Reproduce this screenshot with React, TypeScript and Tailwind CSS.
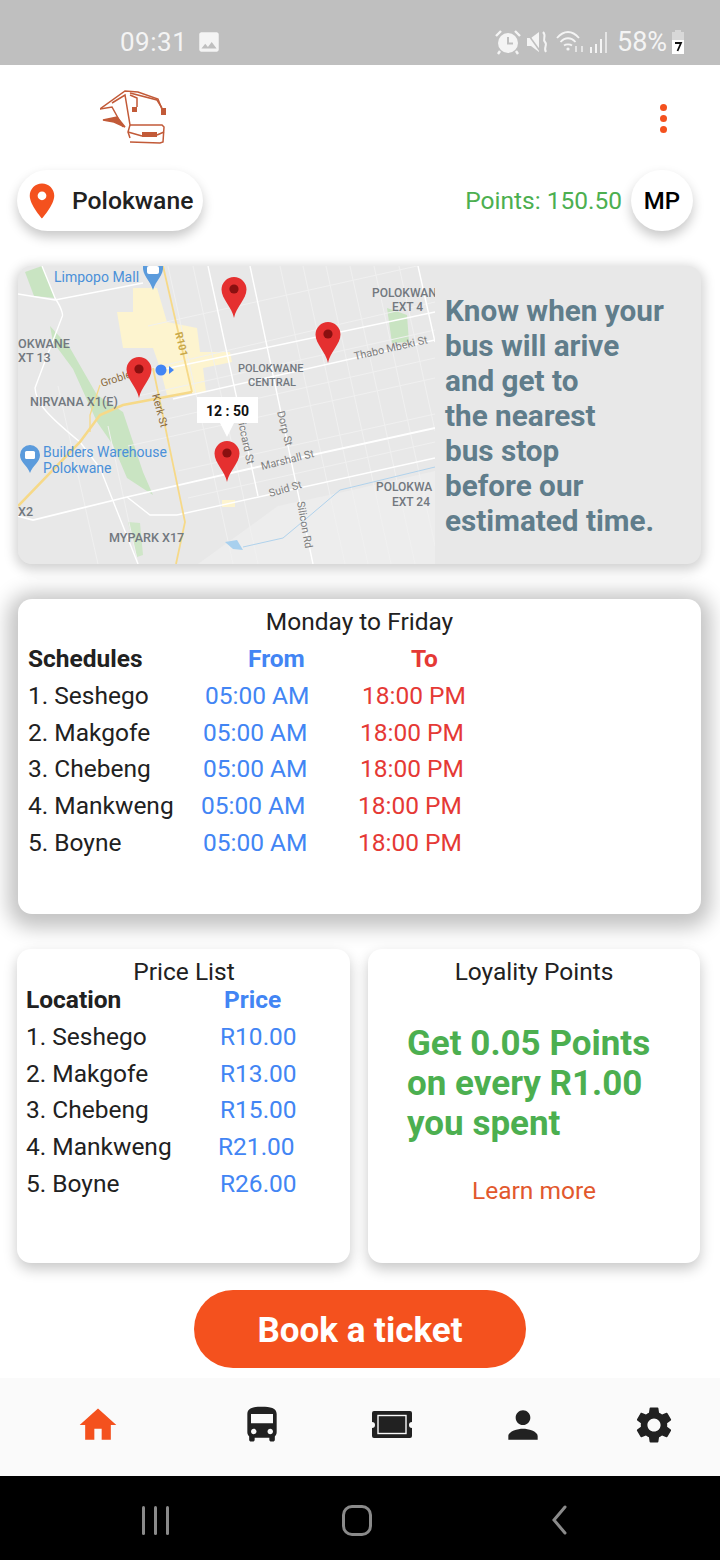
import { MdHome, MdDirectionsBus, MdPerson, MdSettings, MdPhoto, MdPlace } from 'react-icons/md';

const schedules = [
  { name: '1. Seshego', from: 'pl-[4px]', to: 'pl-[4px]' },
  { name: '2. Makgofe', from: 'pl-[2px]', to: 'pl-[2px]' },
  { name: '3. Chebeng', from: 'pl-[2px]', to: 'pl-[2px]' },
  { name: '4. Mankweng', from: 'pl-0', to: 'pl-0' },
  { name: '5. Boyne', from: 'pl-[2px]', to: 'pl-0' },
];

const prices = [
  { name: '1. Seshego', price: 'R10.00', cls: 'pl-[2px]' },
  { name: '2. Makgofe', price: 'R13.00', cls: 'pl-[2px]' },
  { name: '3. Chebeng', price: 'R15.00', cls: 'pl-[2px]' },
  { name: '4. Mankweng', price: 'R21.00', cls: 'pl-0' },
  { name: '5. Boyne', price: 'R26.00', cls: 'pl-[2px]' },
];

function Pin({ x, y }: { x: number; y: number }) {
  return (
    <g transform={`translate(${x} ${y})`}>
      <path d="M0 41C-2 30 -12.5 22 -12.5 12.5A12.5 12.5 0 0 1 12.5 12.5C12.5 22 2 30 0 41Z" fill="#e53030" />
      <circle cx="0" cy="12" r="4.6" fill="#8a1010" />
    </g>
  );
}

function MapDrawing() {
  return (
    <svg viewBox="0 0 417 298" className="h-[298px] w-[417px] shrink-0" fontFamily="Roboto, sans-serif">
      <rect width="417" height="298" fill="#e8e8e8" />
      <path d="M180 298L260 240L330 225L417 205V298Z" fill="#ededed" />
      {/* parks */}
      <path d="M7 6L24 0L37 32L16 30Z" fill="#c9e4c2" />
      <path d="M32 60L52 82L79 129L105 146L125 206L135 229L109 212L95 179L79 156L55 103L35 76Z" fill="#c9e4c2" />
      <path d="M369 42L389 49L391 76L374 77Z" fill="#c9e4c2" />
      <path d="M110 256L122 257L125 289L119 291Z" fill="#cfe6c8" />
      {/* built-up area */}
      <path d="M115 22H139L149 56L179 62L182 86L212 86L214 96L185 102L188 126L149 129L142 102L135 82L105 82L99 46L115 46Z" fill="#fdf4cf" />
      <path d="M204 234H217V241H204Z" fill="#fdf4cf" />
      {/* minor streets */}
      <g stroke="#f0f0f0" strokeWidth="1" fill="none">
        <path d="M130 60L417 -4M120 130L417 64M140 155L417 92M110 180L417 112M160 205L417 148M170 232L417 176M100 110L417 36" />
        <path d="M150 0L215 298M175 0L240 298M262 0L327 298M285 0L350 298M308 0L373 298M332 0L397 298M356 0L417 280M381 0L417 165M40 120L80 298M90 160L120 298" />
      </g>
      {/* roads */}
      <g stroke="#ffffff" strokeWidth="1.4" fill="none">
        <path d="M0 28L37 34L125 17" />
        <path d="M24 0L37 32C45 44 45 50 44 51C35 75 27 95 17 122C18 135 24 145 62 176L82 202L120 298" />
        <path d="M190 0L240 230" />
        <path d="M232 0L295 298" />
        <path d="M400 0L417 76" />
        <path d="M0 250L15 254L109 231L235 202L417 162" strokeWidth="1.8" />
        <path d="M109 231L132 249L159 249L417 192" />
        <path d="M142 104L417 46" />
        <path d="M155 133L417 74" />
      </g>
      {/* yellow roads */}
      <g stroke="#f6d988" strokeWidth="1.8" fill="none">
        <path d="M135 102L167 256L158 298" />
        <path d="M145 0L174 126" />
        <path d="M0 240L62 176L82 149L105 139L174 126" strokeWidth="2.6" />
        <path d="M82 119L72 149V166" strokeWidth="1.3" />
      </g>
      {/* water */}
      <path d="M225 281L265 272L289 252L322 224L355 216L417 201" stroke="#b0d2ec" strokeWidth="1" fill="none" />
      <path d="M207 276L219 274L225 284L215 283Z" fill="#a8d0ee" />
      {/* area labels */}
      <g fill="#72787f" fontSize="12.6" fontWeight="500">
        <text x="354" y="31" fontSize="12">POLOKWAN</text>
        <text x="374" y="45" fontSize="12">EXT 4</text>
        <text x="0" y="82">OKWANE</text>
        <text x="0" y="96">XT 13</text>
        <text x="220" y="106" fontSize="11">POLOKWANE</text>
        <text x="230" y="120" fontSize="11">CENTRAL</text>
        <text x="12" y="140">NIRVANA X1(E)</text>
        <text x="358" y="225" fontSize="12">POLOKWA</text>
        <text x="374" y="240" fontSize="12">EXT 24</text>
        <text x="91" y="276">MYPARK X17</text>
        <text x="0" y="250">X2</text>
      </g>
      {/* places */}
      <g fill="#4a90d9" fontSize="14">
        <text x="36" y="16">Limpopo Mall</text>
        <text x="25" y="191">Builders Warehouse</text>
        <text x="25" y="207">Polokwane</text>
      </g>
      <path d="M125 0H145C146 9 138 14 135 24C132 14 124 9 125 0Z" fill="#5b9bdc" />
      <rect x="129" y="0" width="12" height="8" rx="2" fill="#ffffff" />
      <path d="M12 179A10 10 0 0 1 22 189C22 196 15 199 12 207C9 199 2 196 2 189A10 10 0 0 1 12 179Z" fill="#5b9bdc" />
      <rect x="7" y="185" width="10" height="8" rx="1.5" fill="#ffffff" />
      {/* street names */}
      <g fill="#7d7d7d" fontSize="10.8">
        <text transform="translate(337 94) rotate(-13)">Thabo Mbeki St</text>
        <text transform="translate(244 204) rotate(-14)">Marshall St</text>
        <text transform="translate(252 231) rotate(-16)">Suid St</text>
        <text transform="translate(259 146) rotate(76)">Dorp St</text>
        <text transform="translate(279 236) rotate(80)">Silicon Rd</text>
        <text transform="translate(219 151) rotate(78)">Riccard St</text>
      </g>
      <g fill="#8a6a3c" fontSize="10.8">
        <text transform="translate(84 121) rotate(-18)">Groble</text>
        <text transform="translate(134 129) rotate(75)">Kerk St</text>
      </g>
      <text transform="translate(157 67) rotate(76)" fill="#c9a94a" fontSize="10.5" fontWeight="700">R101</text>
      {/* location dot */}
      <circle cx="143" cy="104" r="5.5" fill="#4285f4" />
      <path d="M151 100L156 104L151 108Z" fill="#4285f4" />
      <Pin x={216} y={11} />
      <Pin x={310} y={56} />
      <Pin x={121} y={91} />
      <Pin x={209} y={175} />
      {/* time bubble */}
      <path d="M179 131H240V157H216L209 171L202 157H179Z" fill="#ffffff" />
      <text x="209.5" y="150" textAnchor="middle" fontSize="14" fontWeight="700" fill="#111111">12 : 50</text>
    </svg>
  );
}

export default function App() {
  return (
    <div className="flex h-[1560px] w-[720px] flex-col overflow-hidden bg-white font-['Roboto',sans-serif]">
      {/* status bar */}
      <div className="flex h-[65px] shrink-0 items-center bg-[#bfbfbf] pt-[18px] text-[#f4f4f4]">
        <span className="ml-[120px] w-[76px] text-[26px] leading-none tracking-[0.5px]">09:31</span>
        <MdPhoto className="text-[26px]" />
        <svg viewBox="0 0 26 26" className="ml-[273px] h-[26px] w-[26px]">
          <circle cx="13" cy="14" r="10" fill="#f4f4f4" />
          <path d="M13 8V14.5H18" stroke="#bfbfbf" strokeWidth="2" fill="none" />
          <path d="M1 7L6 2M25 7L20 2M5 22L3 25M21 22L23 25" stroke="#f4f4f4" strokeWidth="2.4" />
        </svg>
        <svg viewBox="0 0 22 24" className="ml-[6px] h-[24px] w-[22px]" fill="#f4f4f4">
          <path d="M0 8H4L12 2V22L4 16H0Z" />
          <path d="M0 3L13 21" stroke="#bfbfbf" strokeWidth="1.6" />
          <path d="M16 2C20 6 15 9 18 12C21 15 16 18 19 22" stroke="#f4f4f4" strokeWidth="2" fill="none" />
        </svg>
        <svg viewBox="0 0 29 24" className="ml-[7px] h-[24px] w-[29px]" fill="none" stroke="#f4f4f4" strokeWidth="1.8">
          <path d="M1 8C8 0 16 0 23 8M4.5 12C9 7 15 7 19.5 12M8 15.5C10 14 14 14 16 15.5" />
          <circle cx="12" cy="19" r="1.6" fill="#f4f4f4" stroke="none" />
          <path d="M20 16V22M26 16V22" strokeWidth="1.4" />
        </svg>
        <svg viewBox="0 0 18 24" className="ml-[5px] h-[24px] w-[18px]" fill="#f4f4f4">
          <rect x="0" y="17" width="2" height="6" />
          <rect x="5" y="14" width="2" height="9" />
          <rect x="10" y="9" width="2" height="14" />
          <rect x="15" y="2" width="2" height="21" opacity="0.7" />
        </svg>
        <span className="mt-[2px] ml-[9px] text-[27px] leading-none">58%</span>
        <svg viewBox="0 0 14 26" className="ml-[4px] h-[26px] w-[14px]">
          <rect x="4" y="1" width="6" height="3" fill="#d8d8d8" />
          <rect x="1" y="3" width="12" height="22" fill="#d8d8d8" />
          <rect x="1" y="11" width="12" height="14" fill="#ffffff" />
          <path d="M4 14H10L6.5 22" stroke="#111111" strokeWidth="1.8" fill="none" />
        </svg>
      </div>

      {/* header */}
      <div className="flex h-[105px] shrink-0 items-start justify-between pt-[25px] pr-[53px] pl-[100px]">
        <svg viewBox="0 0 66 56" className="h-[56px] w-[66px]" fill="none" stroke="#c25a38" strokeWidth="1.5">
          <path d="M0 19L25 1L38 2L58 9L63 22" />
          <path d="M0 19L12 17L23 37" />
          <path d="M3 30L17 27L25 37L14 32Z" fill="#c25a38" />
          <path d="M12 13L25 5L30 35L28 42L30 48" />
          <path d="M30 5L37 8V17" />
          <path d="M30 3L57 10L62 18" />
          <path d="M30 35H62L64 37L63 52L60 53L30 52" />
          <path d="M28 42L42 46M57 45L64 42" />
          <rect x="42" y="42" width="15" height="5" fill="#c25a38" stroke="none" />
          <rect x="32" y="17" width="5" height="5" fill="#c25a38" stroke="none" />
          <rect x="61" y="18" width="5" height="7" fill="#c25a38" stroke="none" />
        </svg>
        <div className="mt-[14px] flex flex-col gap-[4px]">
          <span className="h-[7px] w-[7px] rounded-full bg-[#f4511e]" />
          <span className="h-[7px] w-[7px] rounded-full bg-[#f4511e]" />
          <span className="h-[7px] w-[7px] rounded-full bg-[#f4511e]" />
        </div>
      </div>

      {/* location row */}
      <div className="flex h-[61px] shrink-0 items-center pr-[27px] pl-[17px]">
        <div className="flex h-[61px] w-[186px] items-center rounded-full bg-white shadow-[0_6px_12px_rgba(0,0,0,0.22)]">
          <MdPlace className="ml-[4px] text-[42px] text-[#f4511e]" />
          <span className="ml-[9px] text-[24.7px] font-medium text-[#212121]">Polokwane</span>
        </div>
        <span className="mt-[2px] ml-auto text-[24.5px] text-[#4caf50]">Points: 150.50</span>
        <div className="ml-[9px] flex h-[61px] w-[62px] items-center justify-center rounded-full bg-white text-[24px] font-medium text-black shadow-[0_6px_12px_rgba(0,0,0,0.22)]">
          MP
        </div>
      </div>

      {/* map card */}
      <div className="mt-[35px] ml-[18px] flex h-[298px] w-[683px] shrink-0 overflow-hidden rounded-[14px] bg-[#e8e8e8] shadow-[0_3px_12px_3px_rgba(0,0,0,0.18)]">
        <MapDrawing />
        <p className="ml-[10px] pt-[27px] text-[29.7px] leading-[35px] font-bold whitespace-nowrap text-[#607d8b]">
          Know when your
          <br />
          bus will arive
          <br />
          and get to
          <br />
          the nearest
          <br />
          bus stop
          <br />
          before our
          <br />
          estimated time.
        </p>
      </div>

      {/* schedule card */}
      <div className="mt-[35px] ml-[18px] h-[315px] w-[683px] shrink-0 rounded-[14px] bg-white pt-[7px] pl-[10px] text-[24.5px] leading-[36.8px] text-[#212121] shadow-[0_4px_20px_10px_rgba(0,0,0,0.24)]">
        <div className="pr-[10px] text-center leading-[31px]">Monday to Friday</div>
        <div className="mt-[4px] flex font-bold">
          <span className="w-[220px]">Schedules</span>
          <span className="w-[163px] text-[#4285f4]">From</span>
          <span className="text-[#e53935]">To</span>
        </div>
        {schedules.map((s) => (
          <div key={s.name} className="flex">
            <span className="w-[173px]">{s.name}</span>
            <span className={`w-[157px] ${s.from} text-[#4285f4]`}>05:00 AM</span>
            <span className={`${s.to} text-[#e53935]`}>18:00 PM</span>
          </div>
        ))}
      </div>

      {/* price + points */}
      <div className="mt-[35px] flex h-[314px] shrink-0 gap-[18px] pl-[17px]">
        <div className="w-[333px] rounded-[14px] bg-white pt-[7px] pl-[9px] text-[24.5px] leading-[36.7px] text-[#212121] shadow-[0_6px_14px_rgba(0,0,0,0.22)]">
          <div className="pr-[8px] text-center leading-[31px]">Price List</div>
          <div className="-mt-[1px] flex leading-[28px] font-bold">
            <span className="w-[198px]">Location</span>
            <span className="text-[#4285f4]">Price</span>
          </div>
          <div className="mt-[5px]">
            {prices.map((p) => (
              <div key={p.name} className="flex">
                <span className="w-[192px]">{p.name}</span>
                <span className={`${p.cls} text-[#4285f4]`}>{p.price}</span>
              </div>
            ))}
          </div>
        </div>
        <div className="flex w-[332px] flex-col rounded-[14px] bg-white pt-[7px] text-[24.5px] text-[#212121] shadow-[0_6px_14px_rgba(0,0,0,0.22)]">
          <div className="text-center leading-[31px]">Loyality Points</div>
          <p className="mt-[37px] pl-[39px] text-[35px] leading-[40px] font-bold text-[#4caf50]">
            Get 0.05 Points
            <br />
            on every R1.00
            <br />
            you spent
          </p>
          <div className="mt-[31px] text-center leading-[31px] text-[#e2582d]">Learn more</div>
        </div>
      </div>

      {/* book button */}
      <div className="mt-[27px] flex shrink-0 justify-center">
        <div className="flex h-[78px] w-[332px] items-center justify-center rounded-full bg-[#f4511e] pt-[5px] text-[35px] font-bold text-white">
          Book a ticket
        </div>
      </div>

      {/* bottom nav */}
      <div className="mt-[10px] flex h-[98px] shrink-0 items-center bg-[#fafafa] pb-[4px] pl-[76px] text-[#212121]">
        <MdHome className="text-[44px] text-[#f4511e]" />
        <MdDirectionsBus className="ml-[120px] text-[44px]" />
        <svg viewBox="0 0 44 44" className="ml-[86px] h-[44px] w-[44px]">
          <path
            d="M2 10A2 2 0 0 1 4 8H40A2 2 0 0 1 42 10V19A3 3 0 0 0 42 25V33A2 2 0 0 1 40 35H4A2 2 0 0 1 2 33V25A3 3 0 0 0 2 19Z"
            fill="#212121"
          />
          <rect x="8" y="12.5" width="28" height="18" fill="#212121" stroke="#fafafa" strokeWidth="1.4" />
        </svg>
        <MdPerson className="ml-[87px] text-[44px]" />
        <MdSettings className="ml-[87px] text-[44px]" />
      </div>

      {/* android nav */}
      <div className="flex h-[84px] shrink-0 items-center bg-black pt-[4px] pl-[142px]">
        <div className="flex gap-[9px]">
          <span className="h-[29px] w-[3px] rounded-full bg-[#8a8a8a]" />
          <span className="h-[29px] w-[3px] rounded-full bg-[#8a8a8a]" />
          <span className="h-[29px] w-[3px] rounded-full bg-[#8a8a8a]" />
        </div>
        <span className="ml-[173px] h-[31px] w-[30px] rounded-[10px] border-[3px] border-[#8a8a8a]" />
        <svg viewBox="0 0 16 30" className="ml-[179px] h-[30px] w-[16px]" fill="none" stroke="#8a8a8a" strokeWidth="3" strokeLinecap="round">
          <path d="M14 2L3 15L14 28" />
        </svg>
      </div>
    </div>
  );
}
